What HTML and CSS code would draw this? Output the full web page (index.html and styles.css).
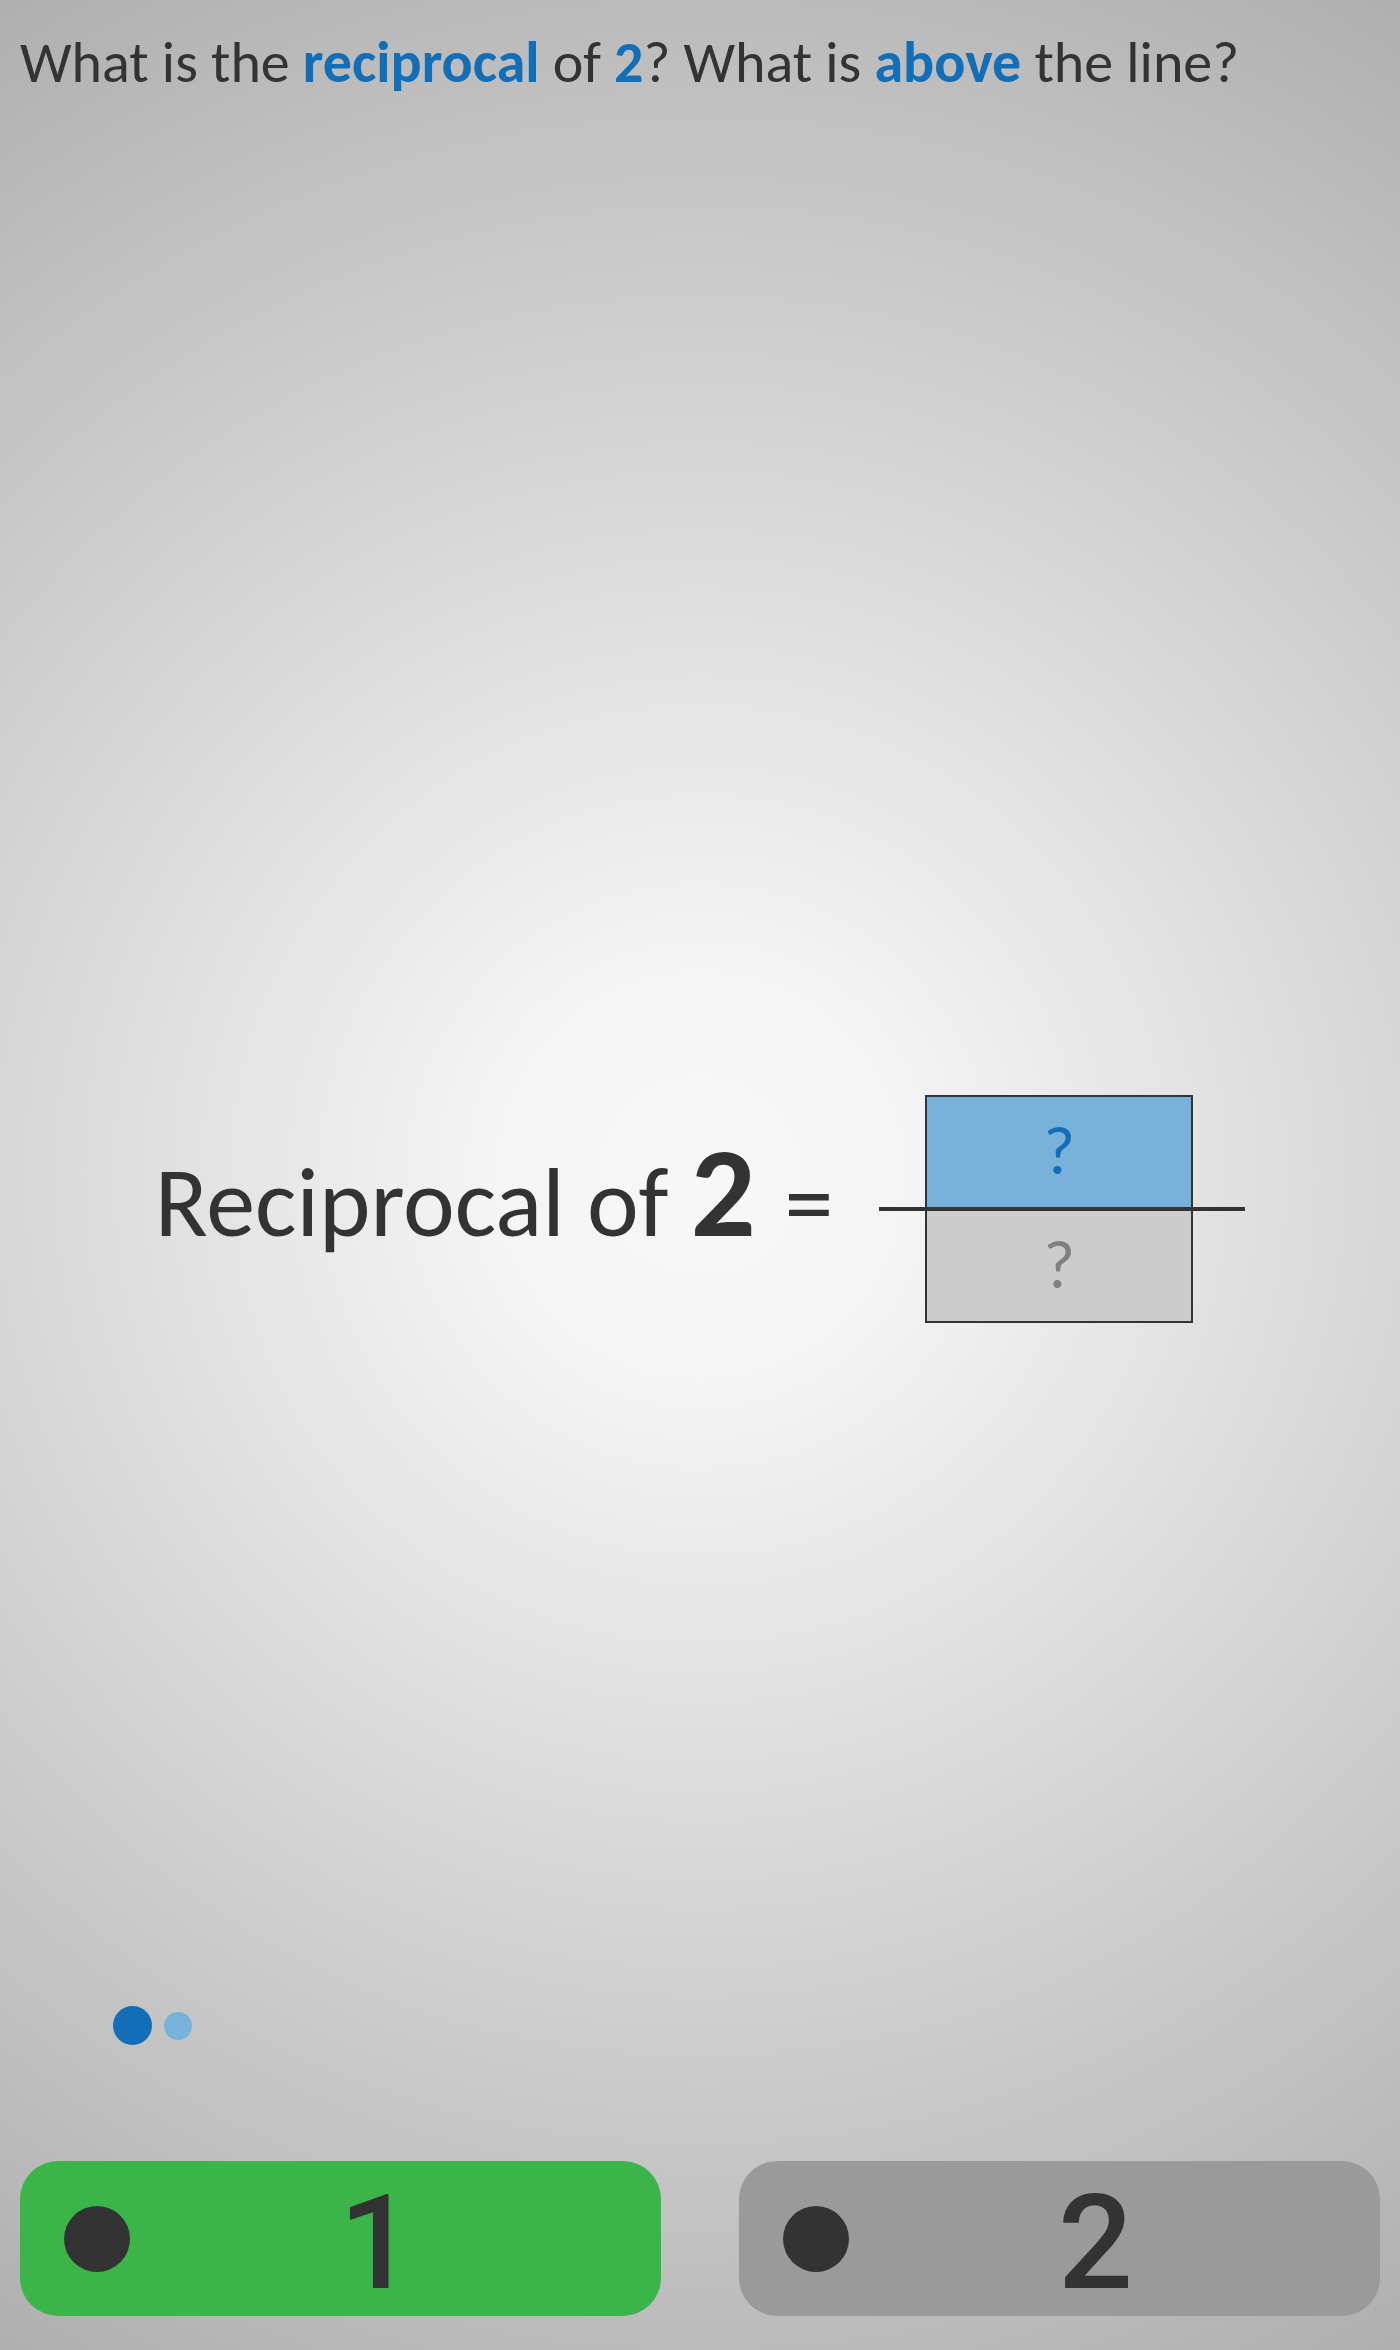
FILE: index.html
```html
<!DOCTYPE html>
<html lang="en">
<head>
<meta charset="utf-8">
<meta name="viewport" content="width=device-width, initial-scale=1">
<title>Reciprocal of 2</title>
<link rel="stylesheet" href="styles.css">
</head>
<body>
<main class="lesson">
  <h1 class="question">What is the <strong>reciprocal</strong> of <strong>2</strong>? What is <strong>above</strong> the line?</h1>
  <section class="equation">
    <p class="term">Reciprocal of <b>2 </b>=</p>
    <div class="fraction">
      <div class="part part-top">?</div>
      <div class="part part-bottom">?</div>
    </div>
  </section>
  <div class="steps"><span class="step step-current"></span><span class="step"></span></div>
  <div class="answers">
    <button class="answer answer-green" type="button"><span class="dot"></span><span class="value">1</span></button>
    <button class="answer" type="button"><span class="dot"></span><span class="value">2</span></button>
  </div>
</main>
</body>
</html>
```
FILE: styles.css
```css
* {
  box-sizing: border-box;
}

body {
  margin: 0;
  color: #333;
  font-family: Carlito, Calibri, "Open Sans", "Noto Sans", sans-serif;
}

.lesson {
  display: flex;
  flex-direction: column;
  min-height: 100vh;
  padding: 28px 20px 34px;
  background: radial-gradient(circle farthest-corner at 50% 50%, #f7f7f7 0%, #f5f5f5 14%, #afafaf 100%);
}

.question {
  margin: 0;
  font-size: 58px;
  line-height: 70px;
  font-weight: 400;
}

.question strong {
  color: #136eb8;
}

.equation {
  display: flex;
  align-items: center;
  justify-content: center;
  gap: 46px;
  flex: 1;
  padding-top: 314px;
}

.term {
  margin: 0;
  padding-bottom: 24px;
  font-size: 98px;
  line-height: 120px;
  white-space: nowrap;
}

.term b {
  font-size: 128px;
}

.fraction {
  position: relative;
  padding: 0 52px 0 46px;
}

.fraction::after {
  content: "";
  position: absolute;
  left: 0;
  right: 0;
  top: 50%;
  height: 4px;
  margin-top: -2px;
  background: #333;
}

.part {
  width: 268px;
  height: 114px;
  border: 2px solid #333;
  font-size: 68px;
  line-height: 108px;
  text-align: center;
}

.part-top {
  background: #78b1d9;
  color: #136eb8;
}

.part-bottom {
  background: #ccc;
  color: #808080;
}

.steps {
  display: flex;
  align-items: center;
  gap: 12px;
  margin: 0 93px 116px;
}

.step {
  width: 28px;
  height: 28px;
  border-radius: 50%;
  background: #78b1d9;
}

.step-current {
  width: 39px;
  height: 39px;
  background: #136eb8;
}

.answers {
  display: grid;
  grid-template-columns: 1fr 1fr;
  gap: 78px;
}

.answer {
  display: grid;
  grid-template-columns: 66px 1fr;
  align-items: center;
  height: 155px;
  padding: 0 38px 0 44px;
  border: 0;
  border-radius: 38px;
  background: #9a9a9a;
  color: #333;
  font: 500 132px/145px Roboto, Inter, sans-serif;
}

.answer-green {
  background: #3bb54a;
}

.dot {
  width: 66px;
  height: 66px;
  border-radius: 50%;
  background: #333;
}

.value {
  padding-top: 10px;
}
```
